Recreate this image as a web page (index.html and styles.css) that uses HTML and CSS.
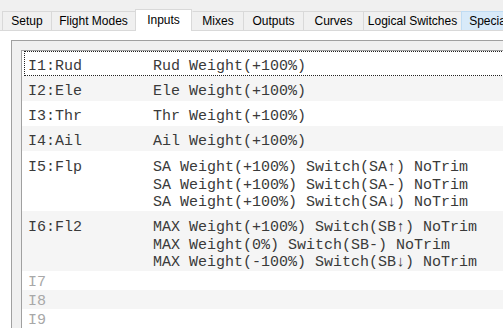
FILE: index.html
```html
<!DOCTYPE html>
<html>
<head>
<meta charset="utf-8">
<link rel="stylesheet" href="styles.css">
</head>
<body>
<div class="window">
  <div class="tabbar">
    <div class="tab w-setup">Setup</div>
    <div class="tab w-fm">Flight Modes</div>
    <div class="tab sel w-inputs">Inputs</div>
    <div class="tab w-mixes">Mixes</div>
    <div class="tab w-outputs">Outputs</div>
    <div class="tab w-curves">Curves</div>
    <div class="tab w-ls">Logical Switches</div>
    <div class="tab hover w-special">Special Functions</div>
  </div>
  <div class="pane">
    <div class="group">
      <div class="list">
        <div class="row single focus"><span class="name">I1:Rud</span><div class="lines"><div>Rud Weight(+100%)</div></div></div>
        <div class="row single alt"><span class="name">I2:Ele</span><div class="lines"><div>Ele Weight(+100%)</div></div></div>
        <div class="row single"><span class="name">I3:Thr</span><div class="lines"><div>Thr Weight(+100%)</div></div></div>
        <div class="row single alt"><span class="name">I4:Ail</span><div class="lines"><div>Ail Weight(+100%)</div></div></div>
        <div class="row multi"><span class="name">I5:Flp</span><div class="lines"><div>SA Weight(+100%) Switch(SA↑) NoTrim</div><div>SA Weight(+100%) Switch(SA-) NoTrim</div><div>SA Weight(+100%) Switch(SA↓) NoTrim</div></div></div>
        <div class="row multi alt"><span class="name">I6:Fl2</span><div class="lines"><div>MAX Weight(+100%) Switch(SB↑) NoTrim</div><div>MAX Weight(0%) Switch(SB-) NoTrim</div><div>MAX Weight(-100%) Switch(SB↓) NoTrim</div></div></div>
        <div class="row empty"><span class="name">I7</span></div>
        <div class="row empty alt"><span class="name">I8</span></div>
        <div class="row empty"><span class="name">I9</span></div>
      </div>
    </div>
  </div>
</div>
</body>
</html>
```

FILE: styles.css
```css
html, body {
  margin: 0;
  padding: 0;
  background: #f0f0f0;
  overflow: hidden;
  width: 503px;
  height: 328px;
}
.window {
  width: 700px;
  height: 328px;
  display: flex;
  flex-direction: column;
}
.tabbar {
  height: 30px;
  display: flex;
  align-items: flex-end;
  padding-left: 2px;
  border-bottom: 1px solid #d9d9d9;
  background: #f0f0f0;
}
.tab {
  box-sizing: border-box;
  height: 19px;
  flex: none;
  border-top: 1px solid #d9d9d9;
  border-left: 1px solid #d9d9d9;
  background: #f0f0f0;
  font-family: "Liberation Sans", Arial, sans-serif;
  font-size: 12px;
  line-height: 18px;
  color: #000;
  text-align: center;
  white-space: nowrap;
}
.tab.sel {
  height: 22px;
  margin-bottom: -1px;
  background: #fff;
  border-right: 1px solid #d9d9d9;
  padding-top: 1px;
}
.tab.sel + .tab {
  border-left-color: transparent;
}
.tab.hover {
  background: #d8eaf9;
  border-color: #c0dcf3;
}
.w-setup { width: 49px; }
.w-fm { width: 84px; }
.w-inputs { width: 57px; }
.w-mixes { width: 51px; }
.w-outputs { width: 60px; }
.w-curves { width: 60px; }
.w-ls { width: 98px; }
.w-special { width: 110px; }

.pane {
  flex: 1;
  background: #fff;
  padding: 9px 0 0 11px;
}
.group {
  height: 100%;
  box-sizing: border-box;
  border-top: 1px solid #a0a0a0;
  border-left: 1px solid #a0a0a0;
  background: #f0f0f0;
  padding: 9px 0 0 9px;
}
.list {
  height: 100%;
  box-sizing: border-box;
  border-top: 1px solid #a0a0a0;
  border-left: 1px solid #a0a0a0;
  background: #fff;
  font-family: "Liberation Mono", "Courier New", monospace;
  font-size: 15px;
  line-height: 18px;
  color: #3a3a3a;
}
.row {
  display: grid;
  grid-template-columns: 125px 1fr;
  padding-left: 6px;
  background: #fff;
  white-space: pre;
}
.row.alt {
  background: #f5f5f5;
}
.row.single {
  padding-top: 7px;
  padding-bottom: 0;
}
.row.multi {
  padding-top: 8px;
}
.row.multi .lines div:last-child {
  line-height: 16px;
}
.row.empty {
  padding-top: 5px;
  line-height: 14px;
  color: #a8a8a8;
}
.row.focus {
  margin-left: 2px;
  border: 1px dotted #222;
  padding: 6px 0 0 3px;
  line-height: 17px;
}
```
